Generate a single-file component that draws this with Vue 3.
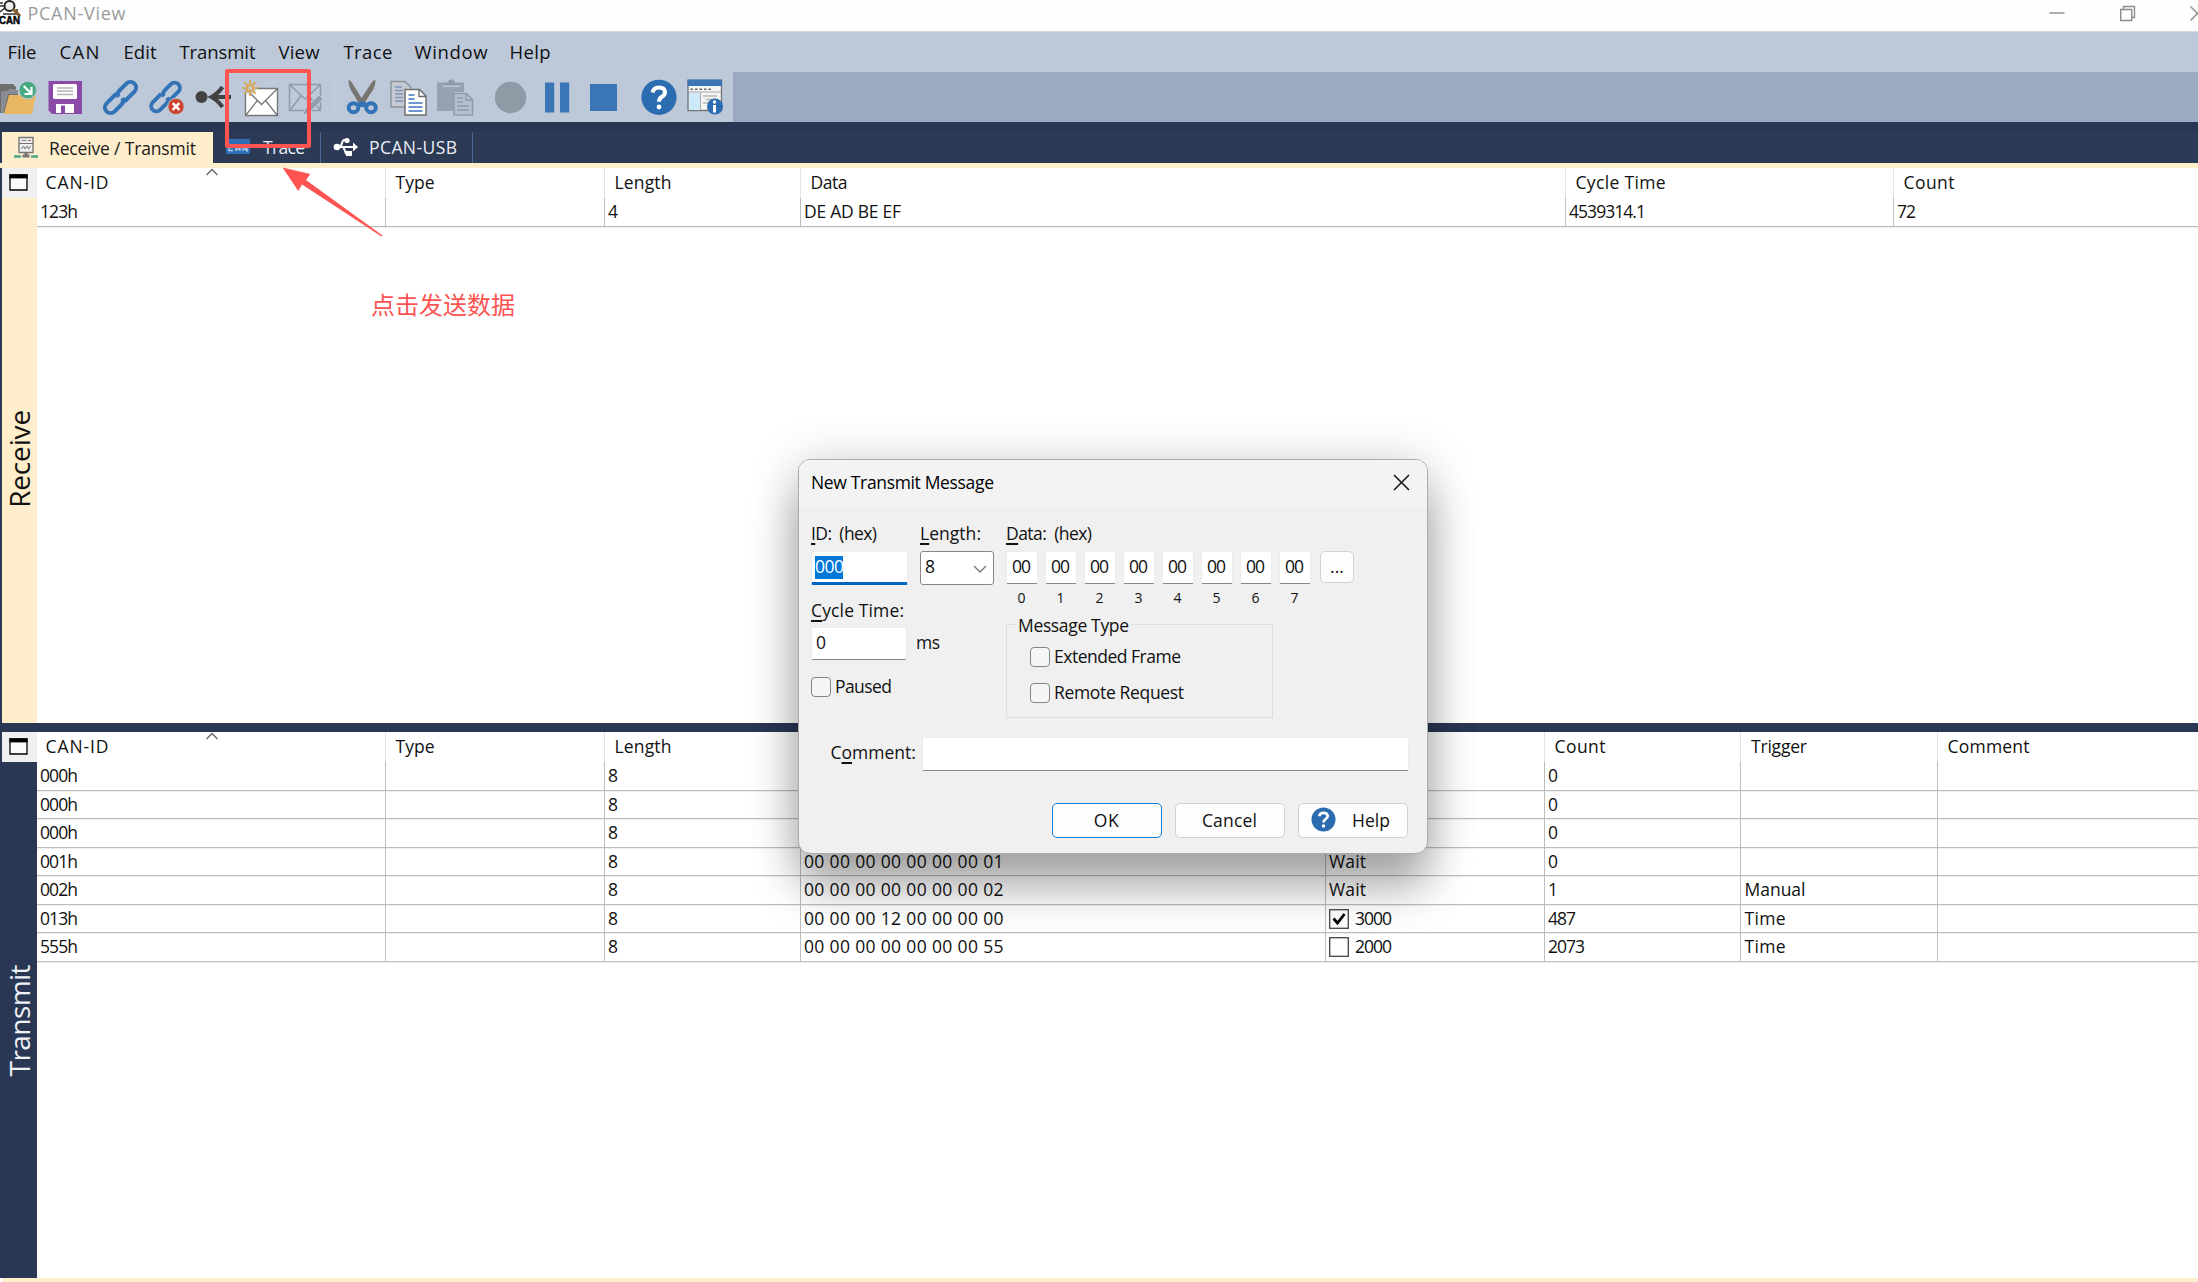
<script setup>
// Spreads a label over its designed length by adjusting the tracking.
const vFit = {
  mounted(el, { value, modifiers }) {
    const n = el.textContent.length
    if (!value || n < 2) return
    const box = el.getBoundingClientRect()
    const natural = modifiers.vertical ? box.height : box.width
    el.style.letterSpacing = (value - natural) / (n - 1) + 'px'
  }
}

const menu = [
  ['File', 8, 29], ['CAN', 60, 40], ['Edit', 124, 33], ['Transmit', 180, 76],
  ['View', 279, 41], ['Trace', 344, 49], ['Window', 415, 73], ['Help', 510, 41]
].map((m, i, all) => ({ text: m[0], fit: m[2], width: (all[i + 1] ? all[i + 1][1] : 560) - m[1] }))

const rxCols = [
  ['CAN-ID', 63, 349], ['Type', 39, 219], ['Length', 57, 196], ['Data', 37, 765],
  ['Cycle Time', 90, 328], ['Count', 51, 305]
]
const rxRow = [['123h', 38], [''], ['4'], ['DE AD BE EF', 97], ['4539314.1', 77], ['72', 19]]

const txCols = [
  ['CAN-ID', 63, 349], ['Type', 39, 219], ['Length', 57, 196], ['Data', 37, 525],
  ['Cycle Time', 90, 219], ['Count', 51, 196.5], ['Trigger', 56, 196.5], ['Comment', 82, 261]
]
const zero = '00 00 00 00 00 00 00 '
const txRows = [
  ['000h', zero + '00', 'Wait', '0', ''],
  ['000h', zero + '00', 'Wait', '0', ''],
  ['000h', zero + '00', 'Wait', '0', ''],
  ['001h', zero + '01', 'Wait', '0', ''],
  ['002h', zero + '02', 'Wait', '1', 'Manual'],
  ['013h', '00 00 00 12 00 00 00 00', '3000', '487', 'Time', true],
  ['555h', zero + '55', '2000', '2073', 'Time', false]
].map(r => [
  { t: r[0], w: 38 }, { t: '' }, { t: '8' }, { t: r[1], w: 199.5 },
  { t: r[2], w: 37, check: r[5] },
  { t: r[3], w: { 1: 0, 3: 28, 4: 37 }[r[3].length] },
  { t: r[4], w: { Manual: 61, Time: 41 }[r[4]] || 0 }, { t: '' }
])
</script>

<template>
  <div class="app">
    <header class="titlebar">
      <svg class="logo" width="22" height="31" viewBox="0 0 22 31">
        <path d="M0 3h3M0 6h4M0 12l5-4M3 14h14v-5" fill="none" stroke="#333" stroke-width="1.6" />
        <circle cx="9.500" cy="6" r="5" fill="#eee" stroke="#222" stroke-width="2" />
        <path d="M13 9l7 7" stroke="#8a5a2b" stroke-width="3" />
        <text x="-1" y="24" textLength="21" lengthAdjust="spacingAndGlyphs">CAN</text>
      </svg>
      <span class="apptitle" v-fit="98">PCAN-View</span>
      <svg class="winbtns" width="158" height="31" viewBox="2040 0 158 31" fill="none" stroke="#8c8c8c" stroke-width="1.4">
        <path d="M2049.500 13h15" />
        <path d="M2120.700 9.500h11v11h-11zM2123.500 9v-2.500h11v11h-2.500" />
        <path d="M2190.500 6.500l14 14M2190.500 20.500l14-14" />
      </svg>
    </header>

    <nav class="menubar">
      <div v-for="m in menu" :key="m.text" class="menuitem" :style="{ width: m.width + 'px' }"><span v-fit="m.fit">{{ m.text }}</span></div>
    </nav>

    <div class="toolbar">
      <div class="tools">
        <svg width="42" height="50" viewBox="0 72 42 50">
          <path d="M0 84h13l3 3v3h2v12L5 113H0z" fill="#6e6e6e" />
          <path d="M1 115V92l8-2v-1h9v5H8L3 115z" fill="#bdc8d9" opacity=".35" />
          <path d="M9 95h27l-4 19H4z" fill="#e8b764" />
          <circle cx="27.700" cy="90" r="8.800" fill="#45a982" stroke="#bdc8d9" stroke-width="1" />
          <path d="M23.700 86l7 7M31.500 87v7h-7" fill="none" stroke="#fff" stroke-width="2.200" />
        </svg>
        <svg width="55" height="50" viewBox="42 72 55 50">
          <path d="M48.500 81H82v33H52l-3.500-3.500z" fill="#8b4aa8" />
          <rect x="53" y="84" width="24" height="15" rx="1.500" fill="#fff" />
          <path d="M57 88h16M57 91h16M57 94.500h16" stroke="#b4b4b4" stroke-width="1.300" />
          <path d="M56 104h18v9H56z" fill="#fff" /><path d="M61 105.500h4v7.500h-4z" fill="#8b4aa8" />
          <path d="M93.300 80v35" stroke="#c9ccd2" />
        </svg>
        <svg width="47" height="50" viewBox="97 72 47 50">
          <g transform="translate(120.500 97.500) rotate(-45)" fill="none" stroke="#3273b6" stroke-width="4">
            <path d="M0-5.700h-14a5.700 5.700 0 0 0 0 11.400h9.500a5.500 5.500 0 0 0 5.500-4" />
            <path d="M0 5.700h14a5.700 5.700 0 0 0 0-11.400H4.500a5.500 5.500 0 0 0-5.500 4" />
          </g>
        </svg>
        <svg width="46" height="50" viewBox="144 72 46 50">
          <g transform="translate(165.500 97) rotate(-45) scale(.92)" fill="none" stroke="#3273b6" stroke-width="4.200">
            <path d="M-1-5.700h-13a5.700 5.700 0 0 0 0 11.400h9.500a5.500 5.500 0 0 0 5.500-4" />
            <path d="M1 5.700h13a5.700 5.700 0 0 0 0-11.400H4.500a5.500 5.500 0 0 0-5.500 4" />
          </g>
          <circle cx="176" cy="106.500" r="8.200" fill="#cb4530" stroke="#bdc8d9" />
          <path d="M172.700 103.200l6.600 6.600M179.300 103.200l-6.600 6.600" stroke="#fff" stroke-width="2.500" />
        </svg>
        <svg width="47" height="50" viewBox="190 72 47 50">
          <circle cx="201.500" cy="97" r="6" fill="#424242" />
          <path d="M211 97h20M222.500 87q-5 7-11 10q6 3 11 10" fill="none" stroke="#424242" stroke-width="4" />
        </svg>
        <svg width="47" height="50" viewBox="237 72 47 50">
          <path d="M245.500 88.500h32v27h-32z" fill="#fff" stroke="#777" stroke-width="1.400" />
          <path d="M246 89l15.500 15.500L277 89M246 115l11-14M277 115l-11-14" fill="none" stroke="#777" stroke-width="1.300" />
          <circle cx="250" cy="88" r="6.500" fill="#bdc8d9" opacity=".8" />
          <path d="M250 80v16M242 88h16M244.300 82.300l11.400 11.400M255.700 82.300l-11.400 11.400" stroke="#dca44d" stroke-width="1.700" />
          <circle cx="250" cy="88" r="3" fill="#c9c5b8" stroke="#dca44d" stroke-width="1.300" />
        </svg>
        <svg width="56" height="50" viewBox="284 72 56 50">
          <path d="M289.500 84.500h31v26h-31zM290 85l15 14L320 85M290 110l11-14M320 110l-11-14" fill="none" stroke="#929ba9" stroke-width="1.500" />
          <path d="M303 115l2-6 14-14 4 4-14 14z" fill="#949dab" stroke="#bdc8d9" />
          <path d="M334.500 80v35" stroke="#c9ccd2" />
        </svg>
        <svg width="44" height="50" viewBox="340 72 44 50">
          <path d="M348.500 80q1.500 0 3 2l10 16 10.500-16q1.500-2 3.500-2 0 8-6 15l-5.500 9h-5l-5-9q-5.500-7-5.500-15z" fill="#777570" />
          <ellipse cx="353.500" cy="107.700" rx="4.800" ry="4.500" fill="none" stroke="#3273b6" stroke-width="4" />
          <ellipse cx="371" cy="107.700" rx="4.800" ry="4.500" fill="none" stroke="#3273b6" stroke-width="4" />
          <path d="M357 103l5-2 5 2-2 4h-6z" fill="#3273b6" />
          <path d="M361.800 82.500l-6.800 0L361.800 94l6.800-11.500z" fill="#bdc8d9" />
        </svg>
        <svg width="47" height="50" viewBox="384 72 47 50">
          <path d="M391 81.500h14l6 6V107h-20z" fill="#c6cbd3" stroke="#8e9297" stroke-width="1.400" />
          <path d="M395 87h7M395 90.500h8M395 94h8M395 97.500h8M395 101h8" stroke="#7f97b8" stroke-width="1.400" />
          <path d="M405 89.500h14.500l6.500 6.500v19h-21z" fill="#fff" stroke="#6f6f6f" stroke-width="1.500" />
          <path d="M419 89.500v7h7" fill="none" stroke="#6f6f6f" stroke-width="1.300" />
          <path d="M408.500 95h6M408.500 99h6M408.500 103h14M408.500 107h14M408.500 111h14" stroke="#3b76bb" stroke-width="1.500" />
        </svg>
        <svg width="57" height="50" viewBox="431 72 57 50">
          <path d="M437 82.500h6V87h17v-4.500h4V92h-10v19h-17z" fill="#98a1af" />
          <path d="M443 85.500v-3h5q0-3 3.500-3t3.500 3h5v3z" fill="#929ba9" />
          <path d="M454 93.500h12.500l6 6V115H454z" fill="#b5bfcd" stroke="#919aa8" stroke-width="1.500" />
          <path d="M466 93.500v6.500h6.500M457 98h6M457 102h6M457 106h12M457 110h12" fill="none" stroke="#919aa8" stroke-width="1.400" />
          <path d="M483 80v35" stroke="#c9ccd2" />
        </svg>
        <svg width="47" height="50" viewBox="488 72 47 50"><circle cx="510.500" cy="97.500" r="15.700" fill="#8f9aa6" /></svg>
        <svg width="45" height="50" viewBox="535 72 45 50"><path d="M545 82.500h9.200v30H545zM560 82.500h9.200v30H560z" fill="#3a76b5" /></svg>
        <svg width="56" height="50" viewBox="580 72 56 50"><path d="M590 84h27v27h-27z" fill="#3a76b5" /><path d="M631 80v35" stroke="#c9ccd2" /></svg>
        <svg width="46" height="50" viewBox="636 72 46 50">
          <circle cx="659" cy="97.300" r="17.600" fill="#2b6cb0" />
          <path d="M652.500 92.500q1-5 6.500-5t6 4.500q0 3-3 4.700t-3 5" fill="none" stroke="#fff" stroke-width="4" />
          <circle cx="659" cy="107" r="2.400" fill="#fff" />
        </svg>
        <svg width="51" height="50" viewBox="682 72 51 50">
          <path d="M688 80.500h33.500v30H688z" fill="#f4f4f4" stroke="#777" stroke-width="1.400" />
          <path d="M687.500 79.500H722V86h-34.500z" fill="#3a76b5" />
          <path d="M690.500 89.300h22" stroke="#666" stroke-width="1.600" stroke-dasharray="2.500 2" />
          <path d="M689 92.500h11V110h-11z" fill="#cdeafb" />
          <path d="M689 92h32M700.500 92v18" stroke="#aaa" />
          <path d="M703 96h14M706 99.500h12M703 103h9" stroke="#b5b5b5" stroke-width="1.400" />
          <circle cx="715" cy="106.500" r="8" fill="#2b6cb0" />
          <path d="M714.500 105v7.500" stroke="#fff" stroke-width="3" /><circle cx="714.500" cy="102" r="1.700" fill="#fff" />
        </svg>
      </div>
    </div>

    <div class="tabs">
      <div class="tab active">
        <svg width="47" height="36" viewBox="2 132 47 36">
          <path d="M19 137.500h14v15H19z" fill="#eee" stroke="#777" stroke-width="1.400" />
          <path d="M21.500 140.500h5" stroke="#888" /><path d="M28 140.500h3" stroke="#c66" />
          <path d="M19 143.500h14M21.500 149l2-3 1.500 3 2-3 1.500 3 2-3" fill="none" stroke="#777" />
          <path d="M26 153v4M22.500 156h7" stroke="#777" stroke-width="3" />
          <path d="M14 156.500h7M31 156.500h7" stroke="#45a982" stroke-width="2.600" />
        </svg>
        <span v-fit="147">Receive / Transmit</span>
      </div>
      <div class="tab trace">
        <svg width="50" height="31" viewBox="213 132 50 31">
          <rect x="226" y="139" width="24" height="15" rx="1" fill="#2f6fb5" />
          <path d="M233 146.500h-4v4h4M236 151v-4.500h4v4.500M236 149h4M243 151v-4.500l4 4.500v-4.500" fill="none" stroke="#b5d0ee" stroke-width="1.300" />
        </svg>
        <span v-fit="42">Trace</span>
      </div>
      <div class="tab usb">
        <svg width="48" height="31" viewBox="321 132 48 31" fill="none" stroke="#fff" stroke-width="2">
          <path d="M336 147h19M339 147q2 0 3-4t4-3M342 147q2 0 3 4t3 3" />
          <circle cx="337" cy="147" r="3.300" fill="#fff" stroke="none" /><circle cx="347" cy="140.500" r="2.600" fill="#fff" stroke="none" />
          <path d="M346 151h6v5h-6z" fill="#fff" stroke="none" /><path d="M353 142.500l5 4.500-5 4.500z" fill="#fff" stroke="none" />
        </svg>
        <span v-fit="88">PCAN-USB</span>
      </div>
    </div>

    <section class="pane receive">
      <aside class="side">
        <div class="pin"><svg width="34" height="30" viewBox="0 0 34 30"><path d="M8 7h17v15H8z" fill="#fbfbfb" stroke="#000" stroke-width="1.300" /><path d="M7.400 6.400h18.200v4H7.400z" /></svg></div>
        <div class="vlabel"><span v-fit.vertical="98">Receive</span></div>
      </aside>
      <div class="grid">
        <div class="head">
          <div v-for="c in rxCols" :key="c[0]" class="h" :style="{ width: c[2] + 'px' }"><span v-fit="c[1]">{{ c[0] }}</span></div>
          <svg class="caret" width="14" height="8" viewBox="0 0 14 8"><path d="M1.500 7L7 1.500 12.500 7" fill="none" stroke="#666" stroke-width="1.400" /></svg>
        </div>
        <div class="row">
          <div v-for="(c, i) in rxRow" :key="i" class="c" :style="{ width: rxCols[i][2] + 'px' }"><span v-fit="c[1]">{{ c[0] }}</span></div>
        </div>
      </div>
    </section>

    <section class="pane transmit">
      <aside class="side">
        <div class="pin"><svg width="34" height="30" viewBox="0 0 34 30"><path d="M8 7h17v15H8z" fill="#fbfbfb" stroke="#000" stroke-width="1.300" /><path d="M7.400 6.400h18.200v4H7.400z" /></svg></div>
        <div class="vlabel"><span v-fit.vertical="112">Transmit</span></div>
      </aside>
      <div class="grid">
        <div class="head">
          <div v-for="c in txCols" :key="c[0]" class="h" :style="{ width: c[2] + 'px' }"><span v-fit="c[1]">{{ c[0] }}</span></div>
          <svg class="caret" width="14" height="8" viewBox="0 0 14 8"><path d="M1.500 7L7 1.500 12.500 7" fill="none" stroke="#666" stroke-width="1.400" /></svg>
        </div>
        <div v-for="(r, k) in txRows" :key="k" class="row">
          <div v-for="(c, i) in r" :key="i" class="c" :style="{ width: txCols[i][2] + 'px' }">
            <svg v-if="c.check !== undefined" class="tick" width="20" height="20" viewBox="0 0 20 20">
              <rect x=".7" y=".7" width="18.600" height="18.600" fill="#fff" stroke="#444" stroke-width="1.300" />
              <path v-if="c.check" d="M4.500 9.500l4 4.500 7-9" fill="none" stroke="#000" stroke-width="2.800" />
            </svg>
            <span v-fit="c.w">{{ c.t }}</span>
          </div>
        </div>
      </div>
    </section>
    <div class="bottomstrip"></div>

    <div class="dialog">
      <div class="dtitle">
        <span v-fit="183">New Transmit Message</span>
        <svg width="17" height="17" viewBox="0 0 17 17"><path d="M1 1l15 15M16 1L1 16" stroke="#111" stroke-width="1.500" /></svg>
      </div>
      <div class="dbody">
        <div class="cols">
          <div class="left">
            <div class="pair">
              <div class="field">
                <label><span v-fit="66"><u>I</u>D:&nbsp; (hex)</span></label>
                <div class="input focus"><mark v-fit="29">000</mark></div>
              </div>
              <div class="field">
                <label><span v-fit="61"><u>L</u>ength:</span></label>
                <div class="combo">8<svg width="14" height="8" viewBox="0 0 14 8"><path d="M1 1l6 6 6-6" fill="none" stroke="#777" stroke-width="1.400" /></svg></div>
              </div>
            </div>
            <label class="cyc"><span v-fit="93"><u>C</u>ycle Time:</span></label>
            <div class="msrow"><div class="input ms">0</div><span v-fit="24">ms</span></div>
            <div class="check"><i></i><span v-fit="57">Paused</span></div>
          </div>
          <div class="right">
            <label><span v-fit="86"><u>D</u>ata:&nbsp; (hex)</span></label>
            <div class="bytes">
              <div v-for="n in 8" :key="n" class="byte">
                <div class="input b"><span v-fit="19">00</span></div>
                <small>{{ n - 1 }}</small>
              </div>
              <button class="btn more">...</button>
            </div>
            <div class="group">
              <span class="legend"><span v-fit="111">Message Type</span></span>
              <div class="check"><i></i><span v-fit="127">Extended Frame</span></div>
              <div class="check"><i></i><span v-fit="130">Remote Request</span></div>
            </div>
          </div>
        </div>
        <div class="comment"><span v-fit="85">C<u>o</u>mment:</span><div class="input"></div></div>
        <div class="actions">
          <button class="btn ok"><span v-fit="25">OK</span></button>
          <button class="btn"><span v-fit="55">Cancel</span></button>
          <button class="btn help">
            <svg width="25" height="25" viewBox="0 0 25 25">
              <circle cx="12.500" cy="12.500" r="12" fill="#2b6cb0" />
              <path d="M8.200 9.300q.6-3.500 4.300-3.500t4.200 3.100q0 2-2.100 3.200t-2.100 3.400" fill="none" stroke="#fff" stroke-width="2.700" /><circle cx="12.500" cy="19" r="1.700" fill="#fff" />
            </svg>
            <span v-fit="38">Help</span>
          </button>
        </div>
      </div>
    </div>

    <div class="redbox"></div>
    <svg class="redarrow" width="104" height="74" viewBox="280 165 104 74">
      <path d="M282.500 167.500L310.300 174 306 180 382.500 235.500 381.500 236.500 302 184.500 298.300 191z" fill="#fd5452" />
    </svg>
    <div class="note">点击发送数据</div>
  </div>
</template>

<style>
body { margin: 0; overflow: hidden; }
</style>

<style scoped>
.app {
  position: relative;
  display: flex;
  flex-direction: column;
  width: 2198px;
  height: 1282px;
  overflow: hidden;
  background: #fff;
  font-family: "Open Sans", "Noto Sans", sans-serif;
  font-size: 17.5px;
  color: #111;
}
.app * { box-sizing: border-box; }
svg { display: block; flex: none; }
span { white-space: nowrap; }
u { text-decoration-thickness: 1.5px; text-underline-offset: 3px; }

.titlebar { display: flex; height: 31px; flex: none; background: #fefefe; }
.logo text { font: bold 10.5px "Liberation Sans", sans-serif; fill: #000; stroke: #000; stroke-width: .5px; }
.apptitle { margin-left: 5.5px; font-size: 18px; line-height: 26px; color: #9b9b9b; }
.winbtns { margin-left: auto; }

.menubar { display: flex; flex: none; height: 41px; padding-left: 7.5px; background: #bdc8d9; border-top: 1px solid #d3dae5; font-size: 18.5px; line-height: 40px; }
.toolbar { height: 50px; flex: none; background: #9caac1; }
.tools { display: flex; width: 733px; height: 50px; background: #bdc8d9; }

.tabs { display: flex; flex: none; height: 46px; padding: 10px 0 0 2px; background: #2c3a56; border-bottom: 5px solid #ffeecb; box-shadow: inset 0 10px #293755; color: #e9edf4; line-height: 31px; }
.tab { display: flex; height: 31px; }
.active { width: 211px; height: 36px; background: #ffeecb; color: #1c1c1c; }
.active span { line-height: 32px; }
.trace { width: 108px; border-right: 1px solid #4a6594; }
.usb { width: 152px; border-right: 1px solid #4a6594; }

.pane { display: flex; flex: none; }
.receive { height: 555px; border-left: 2px solid #293755; }
.transmit { height: 555px; border-top: 9px solid #293755; border-left: 2px solid #293755; }
.side { width: 34.500px; flex: none; display: flex; flex-direction: column; }
.pin { height: 30px; background: #f0f0f0; }
.receive .side { background: #ffeecb; }
.transmit .side { background: #293755; color: #eef1f6; }
.vlabel { display: flex; flex-direction: column; justify-content: flex-end; height: 310px; }
.transmit .vlabel { height: 314px; }
.vlabel span { width: 34px; writing-mode: vertical-rl; transform: rotate(180deg); font-size: 28px; line-height: 34px; }
.grid { flex: 1; overflow: hidden; }
.head { position: relative; display: flex; height: 30px; line-height: 29.5px; }
.h { flex: none; padding-left: 10px; border-right: 1px solid #e3e3e3; }
.h:first-child { padding-left: 9px; }
.caret { position: absolute; left: 168px; top: 0; }
.row { display: flex; height: 28.5px; line-height: 27px; border-bottom: 1px solid #bdbdbd; box-shadow: 0 1px #efefef; }
.c { display: flex; flex: none; padding-left: 3.5px; border-right: 1px solid #bdbdbd; }
.h:last-child, .c:last-child { border-right: 0; }
.tick { margin: 4px 6px 0 0; }
.bottomstrip { height: 4px; flex: none; margin-left: 2px; background: #ffeecb; }

.dialog { position: absolute; left: 798px; top: 459px; width: 630px; height: 395px; border: 1.5px solid #acacac; border-radius: 12px; background: #f0f0f0; box-shadow: 0 36px 44px rgba(0, 0, 0, .28), 0 4px 50px rgba(0, 0, 0, .2); background-clip: padding-box; }
.dtitle { display: flex; justify-content: space-between; height: 46px; padding: 0 17px 0 12px; background: #f3f3f3; border-radius: 11px 11px 0 0; line-height: 45px; color: #000; }
.dtitle svg { margin-top: 14px; }
.dbody { padding: 15px 12px 0; }
.cols { display: flex; }
label { display: block; height: 24px; line-height: 24px; }
.left { width: 195px; }
.pair { display: flex; gap: 12px; }
.field:first-child { width: 97px; }
.input { height: 33px; margin-top: 6px; padding-left: 4px; background: #fff; border: 1px solid #ebebeb; border-bottom: 1.5px solid #868686; border-radius: 2px; line-height: 29px; }
.focus { height: 34px; padding: 3px 0 0 3px; border-bottom: 3px solid #0067c0; line-height: 23px; }
mark { display: inline-block; height: 23px; background: #0078d7; color: #fff; line-height: 21.5px; }
.combo { display: flex; justify-content: space-between; width: 74px; height: 34px; margin-top: 6px; padding: 0 6px 0 4px; background: #fff; border: 1.3px solid #868686; border-radius: 3px; line-height: 29px; }
.combo svg { margin-top: 13px; }
.cyc { margin-top: 12.500px; }
.msrow { display: flex; }
.ms { width: 96px; margin-right: 9px; margin-top: 5px; }
.msrow span { margin-top: 5px; line-height: 30px; }
.check { display: flex; height: 20px; line-height: 18.5px; }
.check i { width: 20px; height: 20px; margin-right: 4px; border: 1.5px solid #858585; border-radius: 4px; background: #f5f5f5; }
.left .check { margin-top: 17px; }
.bytes { display: flex; gap: 8px; }
.byte { width: 31px; }
.b { padding: 0 0 0 5px; width: 32px; }
small { display: block; margin-top: 4px; font-size: 14px; line-height: 20px; text-align: center; }
.btn { display: flex; align-items: center; justify-content: center; width: 110px; height: 35px; padding: 0 0 2px; border: 1.5px solid #d2d2d2; border-radius: 5px; background: #fdfdfd; font: inherit; color: inherit; }
.more { width: 34px; height: 32px; margin: 5.500px 0 0 2px; }
.group { position: relative; width: 267px; height: 94px; margin-top: 16px; padding: 21.500px 0 0 23px; border: 1.5px solid #dedede; }
.legend { position: absolute; left: 9px; top: -12px; padding: 0 2px; background: #f0f0f0; line-height: 24px; }
.group .check + .check { margin-top: 16px; }
.comment { display: flex; margin-top: 12.500px; padding-left: 19.500px; line-height: 43px; }
.comment .input { width: 487px; margin-left: 6px; height: 34px; }
.comment span { width: 85px; }
.actions { display: flex; justify-content: flex-end; gap: 13px; margin: 22.500px 7.500px 0 0; }
.comment + .actions { padding-top: 7px; }
.ok { border-color: #1080d8; }
.help { padding-right: 4px; }
.help svg { margin-right: 16px; }

.redbox { position: absolute; left: 225px; top: 69px; width: 86px; height: 79px; border: 4px solid #fd5452; border-radius: 2px; }
.redarrow { position: absolute; left: 280px; top: 165px; }
.note { position: absolute; left: 371px; top: 287px; font-family: "Noto Sans CJK SC", sans-serif; font-size: 24px; line-height: 34px; color: #fd5452; }
</style>
